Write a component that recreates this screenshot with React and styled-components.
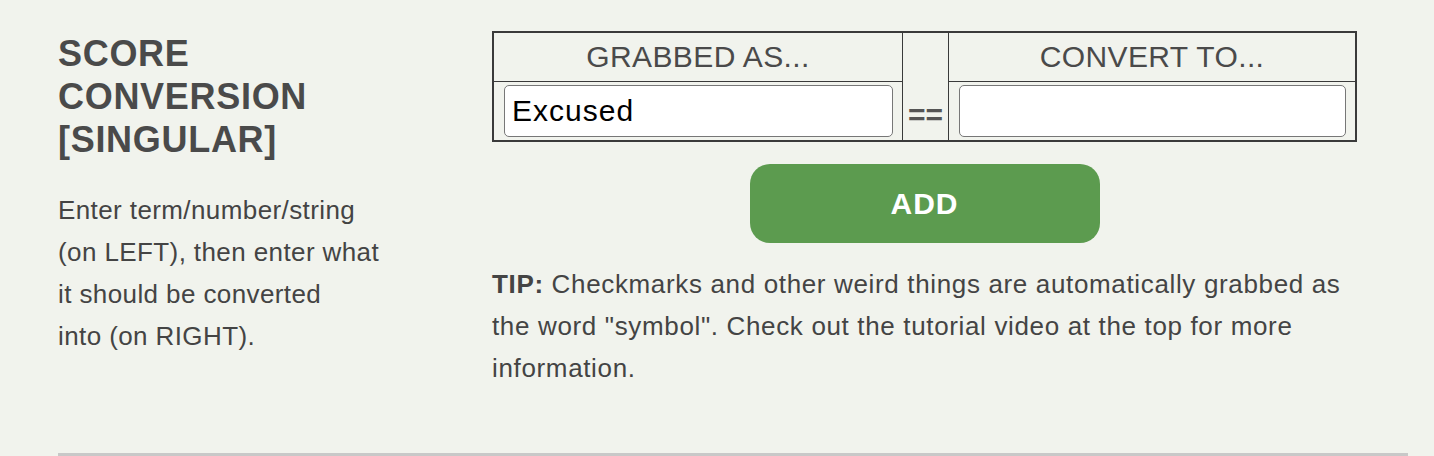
import styled, { createGlobalStyle } from "styled-components";

const GlobalStyle = createGlobalStyle`
  body {
    margin: 0;
    background: #f1f3ed;
    font-family: "Liberation Sans", Arial, sans-serif;
    color: #444;
  }
`;

const Section = styled.section`
  display: flex;
  margin: 0 26px 0 58px;
  padding-bottom: 64px;
  border-bottom: 3px solid #c8c8c8;
`;

const Intro = styled.div`
  width: 434px;
  flex-shrink: 0;
  padding-top: 32px;
`;

const Heading = styled.h2`
  margin: 0;
  width: 300px;
  font-size: 36px;
  line-height: 43px;
  font-weight: bold;
  letter-spacing: 0.7px;
  color: #4a4a4a;
  text-transform: uppercase;
`;

const Description = styled.p`
  margin: 28px 0 0;
  font-size: 26px;
  line-height: 42px;
  letter-spacing: 0.4px;
  color: #444;
`;

const Main = styled.div`
  width: 865px;
  padding-top: 31px;
  display: flex;
  flex-direction: column;
  align-items: center;
`;

const Table = styled.table`
  width: 100%;
  border-collapse: collapse;
  border: 2px solid #3a3a3a;
`;

const HeadCell = styled.th`
  height: 48px;
  border: 1px solid #3a3a3a;
  font-size: 30px;
  font-weight: normal;
  letter-spacing: 0.4px;
  color: #4a4a4a;
  text-align: center;
  padding: 0;
  width: ${(p) => p.w};
`;

const Cell = styled.td`
  border: 1px solid #3a3a3a;
  padding: 3px 9px 3px 10px;
  height: 52px;
`;

const EqCell = styled.td`
  border: 1px solid #3a3a3a;
  width: 45px;
  padding: 0 0 5px;
  vertical-align: bottom;
  text-align: center;
  font-size: 30px;
  font-weight: bold;
  color: #555;
  line-height: 40px;
`;

const TextInput = styled.input`
  box-sizing: border-box;
  display: block;
  width: 100%;
  height: 52px;
  border: 1.5px solid #777;
  border-radius: 5px;
  background: #fff;
  padding: 0 7px;
  font-family: "Liberation Sans", Arial, sans-serif;
  font-size: 30px;
  letter-spacing: 1px;
  color: #000;
  outline: none;
`;

const AddButton = styled.button`
  margin-top: 22px;
  width: 350px;
  height: 79px;
  border: none;
  border-radius: 20px;
  background: #5c9b4f;
  color: #fff;
  font-family: "Liberation Sans", Arial, sans-serif;
  font-size: 30px;
  font-weight: bold;
  letter-spacing: 1px;
  cursor: pointer;
`;

const Tip = styled.p`
  align-self: stretch;
  margin: 20px 0 0;
  font-size: 26px;
  line-height: 42px;
  letter-spacing: 0.65px;
  color: #444;
`;

export default function App() {
  return (
    <>
      <GlobalStyle />
      <Section>
        <Intro>
          <Heading>Score Conversion [Singular]</Heading>
          <Description>
            Enter term/number/string
            <br />
            (on LEFT), then enter what
            <br />
            it should be converted
            <br />
            into (on RIGHT).
          </Description>
        </Intro>
        <Main>
          <Table>
            <tbody>
              <tr>
                <HeadCell w="408px">GRABBED AS...</HeadCell>
                <EqCell rowSpan={2}>==</EqCell>
                <HeadCell>CONVERT TO...</HeadCell>
              </tr>
              <tr>
                <Cell>
                  <TextInput defaultValue="Excused" />
                </Cell>
                <Cell>
                  <TextInput defaultValue="" />
                </Cell>
              </tr>
            </tbody>
          </Table>
          <AddButton>ADD</AddButton>
          <Tip>
            <b>TIP:</b> Checkmarks and other weird things are automatically
            grabbed as the word "symbol". Check out the tutorial video at the
            top for more information.
          </Tip>
        </Main>
      </Section>
    </>
  );
}
